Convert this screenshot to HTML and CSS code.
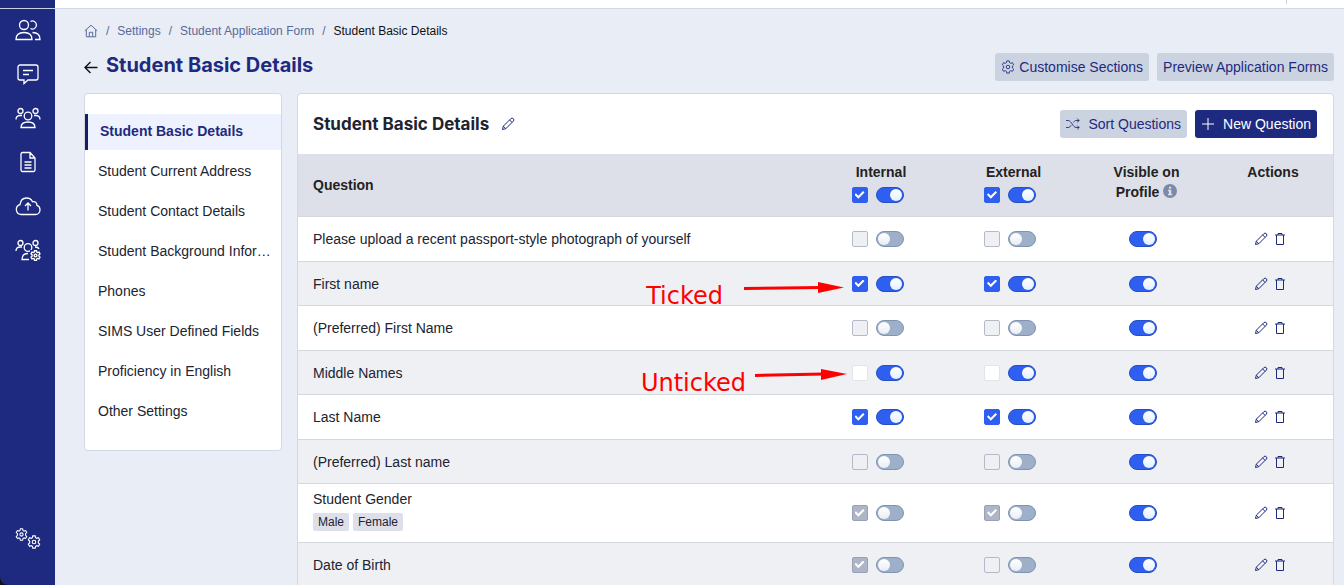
FILE: index.html
```html
<!DOCTYPE html>
<html lang="en">
<head>
  <meta charset="UTF-8">
  <meta name="viewport" content="width=device-width, initial-scale=1.0">
  <title>Student Basic Details</title>
  <link rel="stylesheet" href="styles.css">
</head>
<body>

<svg class="sprite" aria-hidden="true">
  <symbol id="i-gear" viewBox="0 0 16 16">
    <path d="M6.6 1h2.8l.4 2 1.3.8 2-.7 1.400 2.400-1.500 1.400v2.200l1.500 1.400-1.400 2.400-2-.7-1.300.8-.4 2H6.600l-.4-2-1.300-.8-2 .7-1.400-2.400L3 9.100V6.900L1.500 5.500l1.400-2.400 2 .7 1.300-.8z"/>
    <circle cx="8" cy="8" r="2"/>
  </symbol>
  <symbol id="i-pencil" viewBox="0 0 14 14">
    <path d="M1.500 12.500l.8-3.300 7.500-7.500a1.500 1.500 0 0 1 2.500 2.500l-7.500 7.500zM8.600 2.900l2.500 2.500M2.300 9.200l2.500 2.500"/>
  </symbol>
  <symbol id="i-trash" viewBox="0 0 12 14">
    <path d="M1 3h10M4 3V1.500h4V3M2.500 3v9.500h7V3"/>
  </symbol>
</svg>

<div class="app">
  <nav class="sidebar">
    <a href="#" aria-label="Contacts">
      <svg viewBox="0 0 26 22"><circle cx="9" cy="6" r="4.500"/><path d="M1 20.500c0-4.500 3-7 8-7s8 2.500 8 7zM15.500 2.500a4 4 0 1 1 0 7M17.500 13.500c4.500 0 7.500 2.500 7.500 7h-5"/></svg>
    </a>
    <a href="#" aria-label="Messages">
      <svg viewBox="0 0 26 22"><path d="M5 2h16a2 2 0 0 1 2 2v11a2 2 0 0 1-2 2H13l-4 3.500V17H5a2 2 0 0 1-2-2V4a2 2 0 0 1 2-2zM8 7.500h10M8 11.500h6"/></svg>
    </a>
    <a href="#" aria-label="Groups">
      <svg viewBox="0 0 26 22"><circle cx="5.500" cy="4" r="2.500"/><circle cx="20.500" cy="4" r="2.500"/><circle cx="13" cy="9" r="3.800"/><path d="M6 20.500c0-3.500 3-5.500 7-5.500s7 2 7 5.500zM1 12.500c0-2.500 1.500-4 4-4h2M25 12.500c0-2.500-1.500-4-4-4h-2"/></svg>
    </a>
    <a href="#" aria-label="Documents">
      <svg viewBox="0 0 26 22"><path d="M7.500 1.500H15l5 5.500v12a1.500 1.500 0 0 1-1.500 1.500h-11A1.500 1.500 0 0 1 6 19V3a1.500 1.500 0 0 1 1.500-1.500zM15 1.500V7h5M9.500 11h7M9.500 14h7M9.500 17h7"/></svg>
    </a>
    <a href="#" aria-label="Uploads">
      <svg viewBox="0 0 26 22"><path d="M6 19.500a5 5 0 0 1-1-9.800C5.500 5.500 8 3 11.500 3c3 0 5 1.500 6 3.700 2.500-.7 4.500 1 4.400 3.600 2 .6 3.100 2.300 3.100 4.400 0 2.800-2 4.800-4.500 4.800zM13 15.500V8M10 11l3-3 3 3"/></svg>
    </a>
    <a href="#" aria-label="Group settings">
      <svg viewBox="0 0 26 22"><circle cx="5.500" cy="4" r="2.500"/><circle cx="20.500" cy="4" r="2.500"/><circle cx="13" cy="8.500" r="3.800"/><path d="M14 20.500H7c0-3.500 2-6 6-6M1 12c0-2.500 1.500-4 4-4h2M24 10c-.5-1.500-2-2-4-2"/></svg>
      <svg class="mini-gear"><use href="#i-gear"/></svg>
    </a>
    <a href="#" class="sidebar-bottom" aria-label="Settings">
      <svg viewBox="0 0 26 22"><use href="#i-gear" x="0" y="1" width="13" height="13"/><use href="#i-gear" x="12" y="8" width="14" height="14"/></svg>
    </a>
  </nav>

  <div class="content">
    <header class="topbar"><span class="topbar-divider"></span></header>

    <main>
      <nav class="breadcrumb" aria-label="Breadcrumb">
        <a href="#" aria-label="Home"><svg class="icon" viewBox="0 0 14 14"><path d="M.8 6.800L7 1.200l6.200 5.600M2.300 5.800v7h9.400v-7M5.300 12.800V8.300h3.400v4.500"/></svg></a>
        <span>/</span>
        <a href="#">Settings</a>
        <span>/</span>
        <a href="#">Student Application Form</a>
        <span>/</span>
        <span class="current">Student Basic Details</span>
      </nav>

      <div class="page-head">
        <a href="#" class="back" aria-label="Back"><svg viewBox="0 0 14 14"><path d="M13.500 7.500H1M6.500 2L1 7.500 6.500 13"/></svg></a>
        <h1>Student Basic Details</h1>
        <div class="buttons">
          <button class="btn"><svg class="icon"><use href="#i-gear"/></svg>Customise Sections</button>
          <button class="btn">Preview Application Forms</button>
        </div>
      </div>

      <div class="columns">
        <nav class="card sections">
          <a href="#" class="active">Student Basic Details</a>
          <a href="#">Student Current Address</a>
          <a href="#">Student Contact Details</a>
          <a href="#">Student Background Infor…</a>
          <a href="#">Phones</a>
          <a href="#">SIMS User Defined Fields</a>
          <a href="#">Proficiency in English</a>
          <a href="#">Other Settings</a>
        </nav>

        <section class="card questions">
          <div class="card-head">
            <h2>Student Basic Details</h2>
            <button class="icon-btn" aria-label="Edit section"><svg class="icon"><use href="#i-pencil"/></svg></button>
            <div class="buttons">
              <button class="btn btn-wide"><svg class="icon" viewBox="0 0 16 14"><path d="M0 3h2.500c3.500 0 5.500 8 9 8H15M0 11h2.500c1.500 0 2.500-1.200 3.500-2.700M8.500 5.200C9.400 4 10.300 3 11.500 3H15M12.800.8L15 3l-2.200 2.200M12.800 8.800L15 11l-2.200 2.200"/></svg>Sort Questions</button>
              <button class="btn btn-wide btn-primary"><svg class="icon" viewBox="0 0 14 14"><path d="M7 1v12M1 7h12"/></svg>New Question</button>
            </div>
          </div>

          <table>
            <thead>
              <tr>
                <th class="question">Question</th>
                <th class="col-internal">Internal
                  <div class="controls">
                    <input type="checkbox" class="tick" aria-label="All internal required" checked>
                    <input type="checkbox" class="toggle" aria-label="All internal shown" checked>
                  </div>
                </th>
                <th class="col-external">External
                  <div class="controls">
                    <input type="checkbox" class="tick" aria-label="All external required" checked>
                    <input type="checkbox" class="toggle" aria-label="All external shown" checked>
                  </div>
                </th>
                <th class="col-visible">Visible on<br>Profile <svg class="info" viewBox="0 0 14 14"><circle cx="7" cy="7" r="7"/><path d="M6 2.800h2.200v2H6zM5 5.800h3.200v4h1v1.400H5V9.800h1V7.200H5z"/></svg></th>
                <th class="col-actions">Actions</th>
              </tr>
            </thead>
            <tbody id="questionRows"></tbody>
          </table>

          <div class="note note-ticked">
            <span>Ticked</span>
            <svg viewBox="0 0 102 12"><path class="line" d="M1 6.500L78 5.500"/><path d="M75 0l26 5.500L75 11z"/></svg>
          </div>
          <div class="note note-unticked">
            <span>Unticked</span>
            <svg viewBox="0 0 94 12"><path class="line" d="M1 6.500L70 5"/><path d="M67 0l26 5L67 11z"/></svg>
          </div>
        </section>
      </div>
    </main>
  </div>
</div>

<script>
// tick: "on", "off", "locked" (disabled, empty) or "locked-on" (disabled, ticked)
const questions = [
  { name: "Please upload a recent passport-style photograph of yourself", internal: "locked", external: "locked", shown: false },
  { name: "First name", internal: "on", external: "on", shown: true },
  { name: "(Preferred) First Name", internal: "locked", external: "locked", shown: false },
  { name: "Middle Names", internal: "off", external: "off", shown: true },
  { name: "Last Name", internal: "on", external: "on", shown: true },
  { name: "(Preferred) Last name", internal: "locked", external: "locked", shown: false },
  { name: "Student Gender", options: ["Male", "Female"], internal: "locked-on", external: "locked-on", shown: false },
  { name: "Date of Birth", internal: "locked-on", external: "locked", shown: false }
];

function controls(name, side, tick, shown) {
  const checked = tick.endsWith("on") ? "checked" : "";
  const disabled = tick.startsWith("locked") ? "disabled" : "";
  return `
    <div class="controls">
      <input type="checkbox" class="tick" aria-label="${name}: ${side} required" ${checked} ${disabled}>
      <input type="checkbox" class="toggle" aria-label="${name}: ${side} shown" ${shown ? "checked" : ""}>
    </div>`;
}

document.getElementById("questionRows").innerHTML = questions.map(q => {
  const options = (q.options || []).map(o => `<span class="option">${o}</span>`).join("");
  return `
    <tr>
      <td class="question">${q.name}${options ? `<div class="options">${options}</div>` : ""}</td>
      <td>${controls(q.name, "internal", q.internal, q.shown)}</td>
      <td>${controls(q.name, "external", q.external, q.shown)}</td>
      <td><div class="controls"><input type="checkbox" class="toggle" aria-label="${q.name}: visible on profile" checked></div></td>
      <td>
        <div class="controls actions">
          <button class="icon-btn" aria-label="Edit ${q.name}"><svg class="icon"><use href="#i-pencil"/></svg></button>
          <button class="icon-btn" aria-label="Delete ${q.name}"><svg class="icon trash"><use href="#i-trash"/></svg></button>
        </div>
      </td>
    </tr>`;
}).join("");
</script>
</body>
</html>
```
FILE: styles.css
```css
* {
  box-sizing: border-box;
}
body {
  margin: 0;
  background: #111;
  color: #212330;
  font-family: "Liberation Sans", Arial, sans-serif;
  font-size: 14px;
  line-height: 20px;
}
a {
  color: inherit;
  text-decoration: none;
}
button {
  font: inherit;
  border: none;
  cursor: pointer;
}
svg {
  fill: none;
  stroke: currentColor;
}
.sprite {
  position: absolute;
  width: 0;
  height: 0;
}
.icon {
  width: 14px;
  height: 14px;
  flex: none;
}

.app {
  display: flex;
  height: 100vh;
  overflow: hidden;
}

/* left bar */
.sidebar {
  width: 55px;
  flex: none;
  display: flex;
  flex-direction: column;
  align-items: center;
  gap: 22px;
  padding: 18px 0 36px;
  border-top: 1px solid #1d2a7f;
  border-bottom-left-radius: 8px;
  background: linear-gradient(#c9cfdd, #c9cfdd) 0 7px / 100% 1px no-repeat #1d2a7f;
  color: #fff;
}
.sidebar a {
  position: relative;
  height: 22px;
}
.sidebar svg {
  display: block;
  width: 26px;
  height: 22px;
  stroke-width: 1.3;
}
.sidebar .mini-gear {
  position: absolute;
  right: 0;
  bottom: 0;
  width: 11px;
  height: 11px;
  background: #1d2a7f;
  stroke-width: 2;
}
.sidebar .sidebar-bottom {
  margin-top: auto;
}

.content {
  flex: 1;
  min-width: 0;
  background: #e9edf6;
}
.topbar {
  display: flex;
  justify-content: flex-end;
  height: 9px;
  padding-right: 57px;
  border-bottom: 1px solid #d2d9e4;
  background: #fff;
}
.topbar-divider {
  width: 1px;
  height: 4px;
  background: #c9cfdd;
}
main {
  padding: 12px 10px 0 29px;
}

.breadcrumb {
  display: flex;
  align-items: center;
  gap: 8px;
  font-size: 12px;
  color: #586a9a;
}
.breadcrumb a,
.breadcrumb .icon {
  display: block;
}
.breadcrumb .current {
  color: #111;
}

.page-head {
  display: flex;
  align-items: center;
  gap: 8px;
  margin: 12px 0;
}
.back {
  color: #111;
}
.back svg {
  display: block;
  width: 14px;
  height: 14px;
  stroke-width: 1.4;
}
h1, h2 {
  margin: 0;
  font-family: Inter, sans-serif;
  font-weight: 700;
}
h1 {
  padding-bottom: 4px;
  font-size: 20px;
  line-height: 24px;
  color: #1d2a7f;
}
h2 {
  font-size: 17px;
  line-height: 28px;
}
.buttons {
  display: flex;
  gap: 8px;
  margin-left: auto;
}
.btn {
  display: flex;
  align-items: center;
  gap: 4px;
  height: 28px;
  padding: 0 6px;
  border-radius: 3px;
  background: #cbd3e1;
  color: #1d2a7f;
  font-size: 14px;
  white-space: nowrap;
}
.btn-wide {
  gap: 8px;
}
.btn-primary {
  background: #1d2a7f;
  color: #fff;
}
.icon-btn {
  display: block;
  padding: 0;
  background: none;
  color: #1d2a7f;
}
.icon-btn .icon {
  display: block;
}
.icon-btn .trash {
  width: 12px;
}

.columns {
  display: grid;
  grid-template-columns: 198px 1fr;
  gap: 15px;
  align-items: start;
}
.card {
  border: 1px solid #d2d9e4;
  border-radius: 4px;
  background: #fff;
}

/* section list */
.sections {
  display: flex;
  flex-direction: column;
  gap: 4px;
  padding: 20px 0;
}
.sections a {
  padding: 7px 8px 9px 13px;
  white-space: nowrap;
}
.sections .active {
  padding-left: 12px;
  border-left: 3px solid #161f63;
  background: #eef2ff;
  color: #1d2a7f;
  font-weight: bold;
}

/* questions */
.questions {
  position: relative;
}
.card-head {
  display: flex;
  align-items: center;
  gap: 12px;
  padding: 16px 16px 16px 15px;
}
table {
  width: 100%;
  border-collapse: separate;
  border-spacing: 0;
}
.col-internal {
  width: 132px;
}
.col-external,
.col-visible {
  width: 133px;
}
.col-actions {
  width: 120px;
}
th {
  height: 63px;
  padding: 8px 0 0;
  border-bottom: 1px solid #d4d9df;
  background: #dde0e8;
  color: #222;
  text-align: center;
  vertical-align: top;
}
td {
  height: 45px;
  padding: 0;
  border-bottom: 1px solid #d4d9df;
}
tr:nth-child(even) td {
  height: 44px;
  background: #eff0f4;
}
.question {
  padding: 5px 15px;
  text-align: left;
  vertical-align: middle;
}
th.question {
  padding-top: 4px;
}
.controls {
  display: flex;
  justify-content: center;
  align-items: center;
  gap: 8px;
  padding-right: 7px;
}
th .controls {
  margin-top: 5px;
}
.controls.actions {
  gap: 6px;
}
.info {
  width: 14px;
  height: 14px;
  fill: #7d89a8;
  stroke: none;
  vertical-align: -1px;
}
.info path {
  fill: #dde0e8;
}
.options {
  display: flex;
  gap: 4px;
  margin: 4px 0 6px;
}
.option {
  padding: 0 5px;
  border-radius: 2px;
  background: #dde0ea;
  font-size: 12px;
  line-height: 18px;
}

.tick,
.toggle {
  display: block;
  appearance: none;
  margin: 0;
  height: 16px;
  cursor: pointer;
}
.tick {
  width: 16px;
  border: 1px solid #e1e4ea;
  border-radius: 2px;
  background: #fff;
}
.tick:checked {
  border-color: #2f5ff0;
  background: #2f5ff0;
}
.tick:disabled {
  border-color: #b4bac9;
  background: #eff0f4;
}
.tick:disabled:checked {
  border-color: #98a1b8;
  background: #aeb5c7;
}
.tick:checked::before {
  content: "";
  display: block;
  width: 10px;
  height: 8px;
  margin: 3px auto 0;
  background: #fff;
  clip-path: polygon(0 46%, 14% 28%, 38% 60%, 86% 0, 100% 18%, 38% 96%);
}
.toggle {
  width: 28px;
  padding: 1px;
  border: 1px solid #8093b0;
  border-radius: 8px;
  background: #9eb0c9;
}
.toggle::before {
  content: "";
  display: block;
  width: 12px;
  height: 12px;
  border-radius: 50%;
  background: linear-gradient(#fff, #e9eef4);
}
.toggle:checked {
  border-color: #2450c4;
  background: #2f5ff0;
}
.toggle:checked::before {
  margin-left: auto;
  background: linear-gradient(#fff, #e4f1ff);
}

/* red notes drawn over the table */
.note {
  position: absolute;
  display: flex;
  color: #f00;
  font-family: "DejaVu Sans", Verdana, sans-serif;
  font-size: 24px;
  line-height: 28px;
}
.note svg {
  height: 12px;
  fill: #f00;
  stroke: none;
}
.note .line {
  stroke: #f00;
  stroke-width: 3;
}
.note-ticked {
  top: 188px;
  right: 488px;
  gap: 20px;
}
.note-ticked svg {
  width: 102px;
}
.note-unticked {
  top: 275px;
  right: 485px;
  gap: 8px;
}
.note-unticked svg {
  width: 94px;
}
```
